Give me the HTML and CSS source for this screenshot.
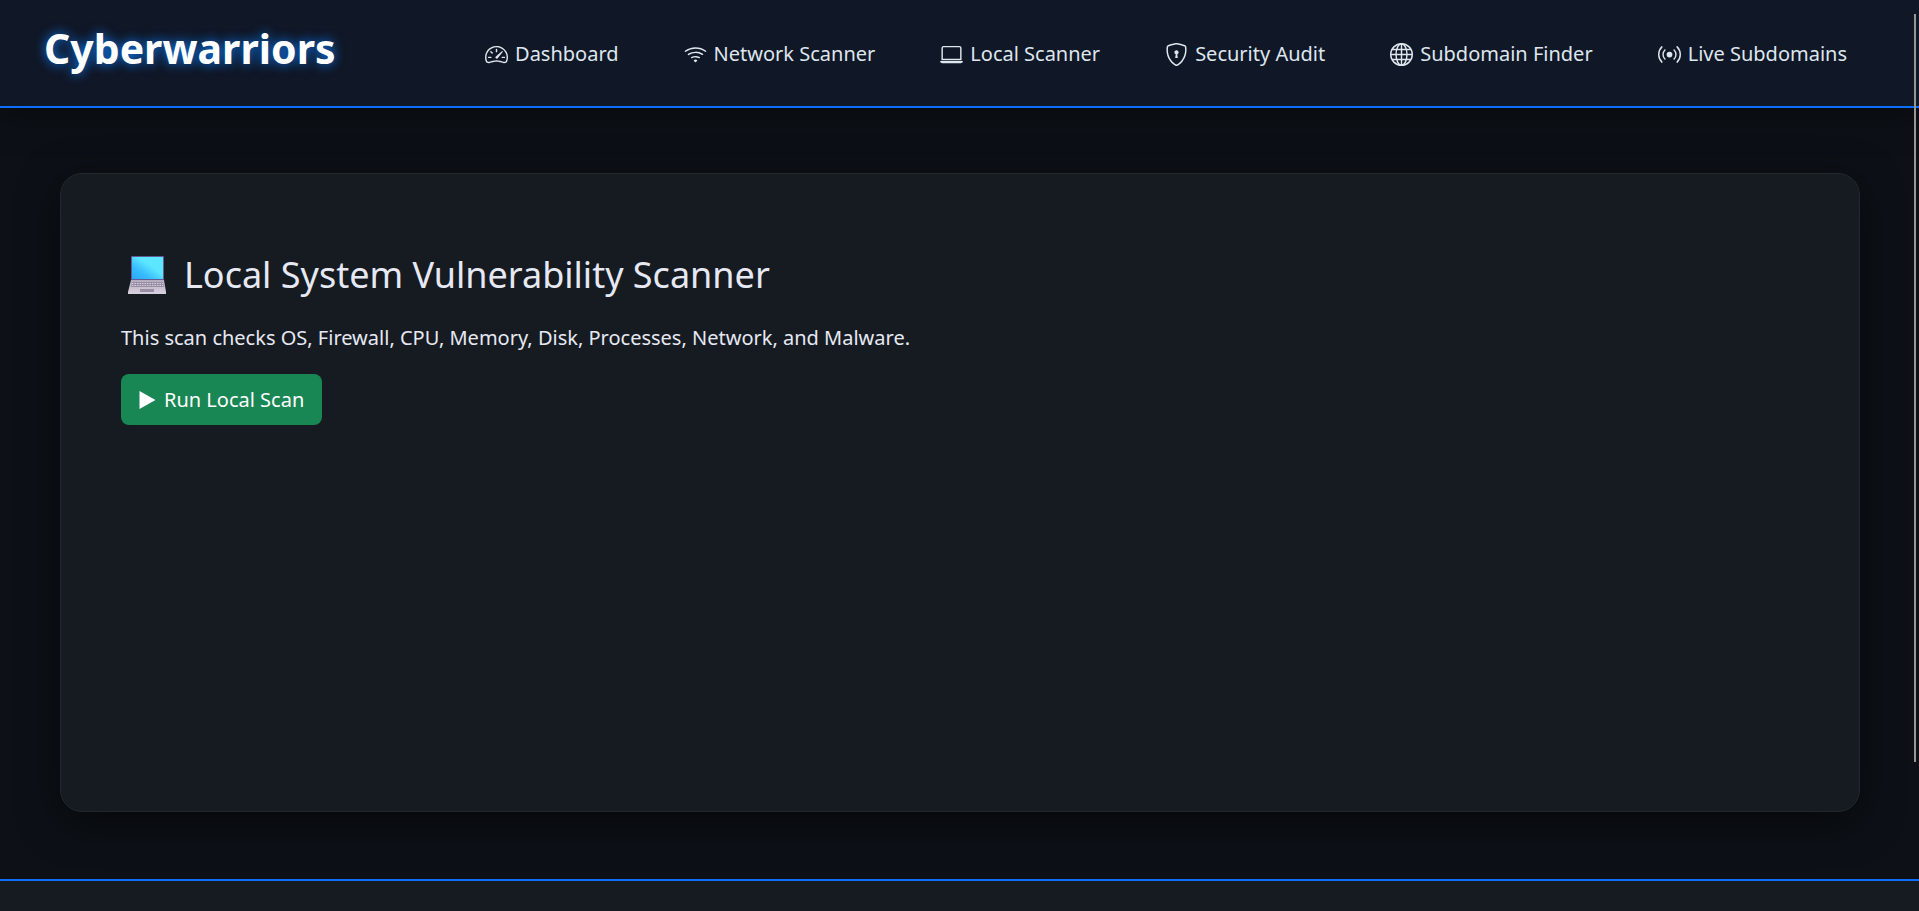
FILE: index.html
```html
<!DOCTYPE html>
<html lang="en">
<head>
<meta charset="utf-8">
<title>Cyberwarriors</title>
<link rel="stylesheet" href="styles.css">
</head>
<body>
<header class="header">
  <a class="brand" href="#">Cyberwarriors</a>
  <nav class="nav">
    <a class="nav-link" href="#"><svg class="icon" viewBox="0 0 16 16"><path d="M8 4a.5.5 0 0 1 .5.5V6a.5.5 0 0 1-1 0V4.500A.5.5 0 0 1 8 4M3.732 5.732a.5.5 0 0 1 .707 0l.915.914a.5.5 0 1 1-.708.708l-.914-.915a.5.5 0 0 1 0-.707M2 10a.5.5 0 0 1 .5-.5h1.586a.5.5 0 0 1 0 1H2.500A.5.5 0 0 1 2 10m9.500 0a.5.5 0 0 1 .5-.5h1.500a.5.5 0 0 1 0 1H12a.5.5 0 0 1-.5-.5m.754-4.246a.39.39 0 0 0-.527-.02L7.547 9.310a.91.91 0 1 0 1.302 1.258l3.434-4.297a.39.39 0 0 0-.029-.518z"/><path fill-rule="evenodd" d="M0 10a8 8 0 1 1 15.547 2.661c-.442 1.253-1.845 1.602-2.932 1.250C11.309 13.488 9.475 13 8 13c-1.474 0-3.310.488-4.615.911-1.087.352-2.490.003-2.932-1.250A8 8 0 0 1 0 10m8-7a7 7 0 0 0-6.603 9.329c.203.575.923.876 1.680.630C4.397 12.533 6.358 12 8 12s3.604.532 4.923.960c.757.245 1.477-.056 1.680-.631A7 7 0 0 0 8 3"/></svg>Dashboard</a>
    <a class="nav-link" href="#"><svg class="icon" viewBox="0 0 16 16"><path d="M15.384 6.115a.485.485 0 0 0-.047-.736A12.440 12.440 0 0 0 8 3C5.259 3 2.723 3.882.663 5.379a.485.485 0 0 0-.048.736.52.52 0 0 0 .668.050A11.450 11.450 0 0 1 8 4c2.507 0 4.827.802 6.716 2.164.205.148.490.130.668-.049"/><path d="M13.229 8.271a.482.482 0 0 0-.063-.745A9.460 9.460 0 0 0 8 6c-1.905 0-3.680.560-5.166 1.526a.48.48 0 0 0-.063.745.525.525 0 0 0 .652.065A8.460 8.460 0 0 1 8 7a8.460 8.460 0 0 1 4.576 1.336c.206.132.480.108.653-.065m-2.183 2.183c.226-.226.185-.605-.100-.750A6.500 6.500 0 0 0 8 9c-1.060 0-2.062.254-2.946.704-.285.145-.326.524-.100.750l.015.015c.160.160.407.190.611.090A5.500 5.500 0 0 1 8 10c.868 0 1.690.201 2.420.560.203.100.450.070.610-.091zM9.060 12.440c.196-.196.198-.520-.040-.660A2 2 0 0 0 8 11.500a2 2 0 0 0-1.020.280c-.238.140-.236.464-.040.660l.706.706a.5.5 0 0 0 .707 0l.707-.707z"/></svg>Network Scanner</a>
    <a class="nav-link" href="#"><svg class="icon" viewBox="0 0 16 16"><path d="M13.500 3a.5.5 0 0 1 .5.5V11H2V3.500a.5.5 0 0 1 .5-.5zm-11-1A1.500 1.500 0 0 0 1 3.500V12h14V3.500A1.500 1.500 0 0 0 13.500 2zM0 12.500h16a1.500 1.500 0 0 1-1.500 1.500h-13A1.500 1.500 0 0 1 0 12.500"/></svg>Local Scanner</a>
    <a class="nav-link" href="#"><svg class="icon" viewBox="0 0 16 16"><path d="M5.338 1.590a61 61 0 0 0-2.837.856.48.48 0 0 0-.328.390c-.554 4.157.726 7.190 2.253 9.188a10.700 10.700 0 0 0 2.287 2.233c.346.244.652.420.893.533q.18.085.293.118a1 1 0 0 0 .101.025 1 1 0 0 0 .100-.025q.114-.034.294-.118c.240-.113.547-.290.893-.533a10.700 10.700 0 0 0 2.287-2.233c1.527-1.997 2.807-5.031 2.253-9.188a.48.48 0 0 0-.328-.390c-.651-.213-1.750-.560-2.837-.855C9.552 1.290 8.531 1.067 8 1.067c-.530 0-1.552.223-2.662.524zM5.072.560C6.157.265 7.310 0 8 0s1.843.265 2.928.560c1.110.300 2.229.655 2.887.870a1.540 1.540 0 0 1 1.044 1.262c.596 4.477-.787 7.795-2.465 9.990a11.800 11.800 0 0 1-2.517 2.453 7 7 0 0 1-1.048.625c-.280.132-.581.240-.829.240s-.548-.108-.829-.240a7 7 0 0 1-1.048-.625 11.800 11.800 0 0 1-2.517-2.453C1.928 10.487.545 7.169 1.141 2.692A1.540 1.540 0 0 1 2.185 1.430 63 63 0 0 1 5.072.560"/><path d="M9.500 6.500a1.500 1.500 0 0 1-1 1.415l.385 1.990a.5.5 0 0 1-.491.595h-.788a.5.5 0 0 1-.490-.595l.384-1.990a1.500 1.500 0 1 1 2-1.415"/></svg>Security Audit</a>
    <a class="nav-link" href="#"><svg class="icon" viewBox="0 0 16 16"><g fill="none" stroke="currentColor"><circle cx="8" cy="8" r="7.500"/><ellipse cx="8" cy="8" rx="3.800" ry="7.500"/><path d="M8 .5v15M.5 8h15M1.500 4.500h13M1.500 11.500h13"/></g></svg>Subdomain Finder</a>
    <a class="nav-link" href="#"><svg class="icon" viewBox="0 0 16 16"><path d="M3.050 3.050a7 7 0 0 0 0 9.900.5.5 0 0 1-.707.707 8 8 0 0 1 0-11.314.5.5 0 0 1 .707.707m2.122 2.122a4 4 0 0 0 0 5.656.5.5 0 1 1-.708.708 5 5 0 0 1 0-7.072.5.5 0 0 1 .708.708m5.656-.708a.5.5 0 0 1 .708 0 5 5 0 0 1 0 7.072.5.5 0 1 1-.708-.708 4 4 0 0 0 0-5.656.5.5 0 0 1 0-.708m2.122-2.120a.5.5 0 0 1 .707 0 8 8 0 0 1 0 11.313.5.5 0 0 1-.707-.707 7 7 0 0 0 0-9.900.5.5 0 0 1 0-.707zM10 8a2 2 0 1 1-4 0 2 2 0 0 1 4 0"/></svg>Live Subdomains</a>
  </nav>
</header>
<main class="main">
  <section class="card">
    <h1 class="title">
      <svg class="laptop" viewBox="0 0 38 39">
        <defs>
          <linearGradient id="screen" x1="0" y1="1" x2="1" y2="0"><stop offset="0" stop-color="#28a7ff"/><stop offset=".3" stop-color="#38bcff"/><stop offset=".6" stop-color="#5ce6ff"/></linearGradient>
          <linearGradient id="base" x1="0" y1="0" x2="0" y2="1"><stop offset="0" stop-color="#b4acbc"/><stop offset="1" stop-color="#d8d2e0"/></linearGradient>
        </defs>
        <rect x="3" y="0" width="33" height="25" rx="1" fill="#635994"/>
        <rect x="4" y="1" width="31" height="22" fill="url(#screen)"/>
        <path d="M3 24h33l2 12v2H0v-2z" fill="url(#base)"/>
        <path d="M0 36h38v2H0z" fill="#d5cfdd"/>
        <path d="M4 26h31l1 5H3z" fill="#998ea4"/>
        <path d="M4 27.500h31M4 29.500h31" stroke="#d3cddc" stroke-dasharray="1.500 1"/>
        <path d="M12 33h14v3H12z" fill="#998ea4"/>
      </svg>
      <span>Local System Vulnerability Scanner</span>
    </h1>
    <p class="lead">This scan checks OS, Firewall, CPU, Memory, Disk, Processes, Network, and Malware.</p>
    <button class="run" type="button"><svg class="play" viewBox="0 0 16 18"><path d="M0 0l16 9-16 9z"/></svg>Run Local Scan</button>
  </section>
</main>
<footer class="footer"></footer>
<div class="scroll-thumb"></div>
</body>
</html>
```

FILE: styles.css
```css
* {
  box-sizing: border-box;
}

body {
  margin: 0;
  min-height: 100vh;
  display: flex;
  flex-direction: column;
  background: #0d1117;
  color: #e6e9f3;
  font-family: "Noto Sans", "Open Sans", sans-serif;
  font-size: 20px;
  line-height: 32px;
}

.header {
  display: flex;
  align-items: center;
  justify-content: space-between;
  padding: 18px 72px 28px 44px;
  background: #101726;
  border-bottom: 2px solid #0d6efd;
  box-shadow: 0 4px 30px rgba(0, 0, 0, 0.5);
}

.brand {
  color: #fff;
  font-size: 41px;
  font-weight: 700;
  line-height: 60px;
  text-decoration: none;
  text-shadow: 0 0 12px #0d7efd;
}

.nav {
  display: flex;
  gap: 65px;
  padding-top: 12px;
}

.nav-link {
  display: flex;
  align-items: center;
  gap: 7px;
  color: #dee6ee;
  text-decoration: none;
  white-space: nowrap;
}

.icon {
  width: 23px;
  height: 23px;
  fill: currentColor;
}

.main {
  padding: 65px 59px 67px 60px;
}

.card {
  min-height: 639px;
  padding: 70px 60px;
  background: #161b22;
  border: 1px solid #23282d;
  border-radius: 22px;
  box-shadow: 0 10px 40px rgba(0, 0, 0, 0.6);
}

.title {
  display: flex;
  align-items: center;
  gap: 18px;
  margin: 0 0 16px;
  padding-left: 7px;
  font-size: 36px;
  font-weight: 400;
  line-height: 62px;
}

.laptop {
  width: 38px;
  height: 39px;
}

.lead {
  margin: 0 0 20px;
}

.run {
  display: flex;
  align-items: center;
  gap: 8px;
  padding: 10px 18px 9px;
  border: 0;
  border-radius: 8px;
  background: #198754;
  color: #fff;
  font: inherit;
}

.play {
  width: 17px;
  height: 18px;
  fill: currentColor;
}

.footer {
  flex: 1;
  background: #161b22;
  border-top: 2px solid #0d6efd;
}

.scroll-thumb {
  position: fixed;
  top: 14px;
  right: 3px;
  width: 2px;
  height: 748px;
  background: #999791;
}
```
